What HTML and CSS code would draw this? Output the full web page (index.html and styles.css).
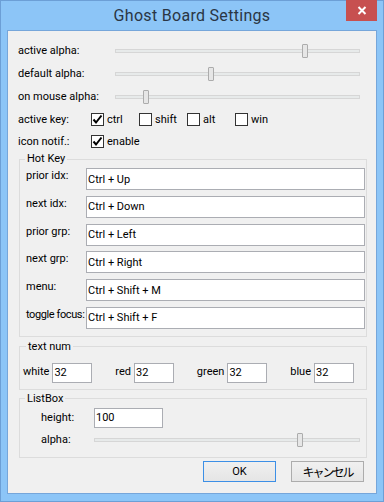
FILE: index.html
```html
<!DOCTYPE html>
<html>
<head>
    <title>Ghost Board Settings</title>
    <meta charset="UTF-8">
    <link rel="stylesheet" href="styles.css">
</head>
<body>
    <div class="window">
        <div class="titlebar">
            <span class="title">Ghost Board Settings</span>
            <button type="button" class="close-button">
                <svg width="10" height="9" viewBox="0 0 10 9">
                    <path d="M1.5 1 L8.5 8 M8.5 1 L1.5 8" stroke="#fff" stroke-width="2" fill="none"/>
                </svg>
            </button>
        </div>

        <div class="client">
            <div class="row">
                <span class="label wide">active alpha:</span>
                <div class="slider"><div class="track"></div><div class="thumb" style="left: 187px;"></div></div>
            </div>
            <div class="row">
                <span class="label wide">default alpha:</span>
                <div class="slider"><div class="track"></div><div class="thumb" style="left: 93px;"></div></div>
            </div>
            <div class="row">
                <span class="label wide">on mouse alpha:</span>
                <div class="slider"><div class="track"></div><div class="thumb" style="left: 28px;"></div></div>
            </div>
            <div class="row">
                <span class="label">active key:</span>
                <div class="checks">
                    <label class="check"><span class="box checked"><svg width="11" height="11" viewBox="0 0 11 11"><path d="M1.5 5.5 L4 8.5 L9.5 1.5" stroke="#000" stroke-width="2" fill="none"/></svg></span>ctrl</label>
                    <label class="check"><span class="box"></span>shift</label>
                    <label class="check"><span class="box"></span>alt</label>
                    <label class="check"><span class="box"></span>win</label>
                </div>
            </div>
            <div class="row short">
                <span class="label">icon notif.:</span>
                <div class="checks">
                    <label class="check"><span class="box checked"><svg width="11" height="11" viewBox="0 0 11 11"><path d="M1.5 5.5 L4 8.5 L9.5 1.5" stroke="#000" stroke-width="2" fill="none"/></svg></span>enable</label>
                </div>
            </div>

            <fieldset class="group hotkey">
                <legend>Hot Key</legend>
                <div class="fields">
                    <div class="field"><span class="name">prior idx:</span><input class="text" type="text" value="Ctrl + Up"></div>
                    <div class="field"><span class="name">next idx:</span><input class="text" type="text" value="Ctrl + Down"></div>
                    <div class="field"><span class="name">prior grp:</span><input class="text" type="text" value="Ctrl + Left"></div>
                    <div class="field"><span class="name">next grp:</span><input class="text" type="text" value="Ctrl + Right"></div>
                    <div class="field"><span class="name">menu:</span><input class="text" type="text" value="Ctrl + Shift + M"></div>
                    <div class="field"><span class="name tight">toggle focus:</span><input class="text" type="text" value="Ctrl + Shift + F"></div>
                </div>
            </fieldset>

            <fieldset class="group textnum">
                <legend>text num</legend>
                <div class="nums">
                    <div class="num"><span>white</span><input class="text small" type="text" value="32"></div>
                    <div class="num"><span>red</span><input class="text small" type="text" value="32"></div>
                    <div class="num"><span>green</span><input class="text small" type="text" value="32"></div>
                    <div class="num"><span>blue</span><input class="text small" type="text" value="32"></div>
                </div>
            </fieldset>

            <fieldset class="group listbox">
                <legend>ListBox</legend>
                <div class="lb-row">
                    <span class="lb-label">height:</span>
                    <input class="text medium" type="text" value="100">
                </div>
                <div class="lb-row alpha">
                    <span class="lb-label">alpha:</span>
                    <div class="slider"><div class="track"></div><div class="thumb" style="left: 203px;"></div></div>
                </div>
            </fieldset>

            <div class="buttons">
                <button type="button" class="push default">OK</button>
                <button type="button" class="push jp">キャンセル</button>
            </div>
        </div>
    </div>
</body>
</html>
```

FILE: styles.css
```css
body {
    margin: 0;
    font-family: Roboto, "Noto Sans", sans-serif;
    font-size: 11px;
    color: #000;
}

.window {
    width: 384px;
    height: 502px;
    box-sizing: border-box;
    border: 1px solid #6c9fd6;
    background-color: #8cc5f7;
    padding: 0 6px 7px 6px;
    display: flex;
    flex-direction: column;
}

.titlebar {
    height: 29px;
    position: relative;
    display: flex;
    align-items: center;
    justify-content: center;
}

.title {
    font-size: 16px;
    letter-spacing: 0.3px;
    color: #2a3644;
}

.close-button {
    position: absolute;
    top: -1px;
    right: 0;
    width: 31px;
    height: 21px;
    padding: 0;
    border: none;
    background-color: #c75050;
    display: flex;
    align-items: center;
    justify-content: center;
}

.client {
    flex: 1;
    border: 1px solid #76a6da;
    background-color: #f0f0f0;
    padding-top: 8px;
    display: flex;
    flex-direction: column;
}

.row {
    display: flex;
    align-items: center;
    height: 23px;
    padding: 0 16px 0 10px;
}

.row.short {
    height: 20px;
}

.label {
    width: 73px;
    flex: none;
}

.label.wide {
    width: 97px;
}

.slider {
    flex: 1;
    position: relative;
    height: 14px;
}

.track {
    position: absolute;
    left: 0;
    right: 0;
    top: 5px;
    height: 4px;
    box-sizing: border-box;
    border: 1px solid #d6d6d6;
    background-color: #e7eaea;
}

.thumb {
    position: absolute;
    top: 0;
    width: 6px;
    height: 14px;
    box-sizing: border-box;
    border: 1px solid #acacac;
    border-radius: 1px;
    background-color: #e6e6e6;
}

.checks {
    display: flex;
}

.check {
    width: 48px;
    display: flex;
    align-items: center;
    gap: 3px;
}

.box {
    width: 13px;
    height: 13px;
    box-sizing: border-box;
    border: 1px solid #333;
    background-color: #fff;
    display: flex;
    align-items: center;
    justify-content: center;
}

.group {
    margin: 0 9px 0 11px;
    border: 1px solid #dcdcdc;
    padding: 0 1px 0 5px;
    min-width: 0;
}

.group legend {
    padding: 0 2px;
    line-height: 16px;
}

.text {
    box-sizing: border-box;
    margin: 0;
    border: 1px solid #abadb3;
    background-color: #fff;
    padding: 0 1px;
    font: inherit;
    color: #000;
    outline: none;
}

.hotkey {
    padding-top: 1px;
    padding-bottom: 7px;
}

.fields {
    display: flex;
    flex-direction: column;
    gap: 5.8px;
    padding-left: 1px;
}

.field {
    display: flex;
    align-items: flex-start;
}

.name {
    width: 60px;
    flex: none;
    line-height: 16px;
    white-space: nowrap;
}

.name.tight {
    letter-spacing: -0.4px;
}

.field .text {
    flex: 1;
    min-width: 0;
    height: 22px;
}

.textnum {
    margin-top: 2px;
    padding: 8px 12px 6px 3px;
}

.textnum legend {
    margin-left: 3px;
}

.nums {
    display: flex;
    justify-content: space-between;
    align-items: center;
}

.num {
    display: flex;
    align-items: center;
    gap: 3px;
}

.num span {
    margin-top: -2px;
}

.text.small {
    width: 40px;
    height: 20px;
}

.listbox {
    margin-top: 1px;
    padding: 1px 6px 10px 5px;
}

.lb-row {
    display: flex;
    align-items: center;
    padding-left: 16px;
}

.lb-row.alpha {
    margin-top: 5px;
}

.lb-label {
    width: 53px;
    flex: none;
}

.text.medium {
    width: 69px;
    height: 20px;
}

.buttons {
    display: flex;
    justify-content: flex-end;
    gap: 15px;
    margin: 3px 12px 0 0;
}

.push {
    width: 73px;
    height: 21px;
    padding: 0;
    border: 1px solid #acacac;
    background: linear-gradient(#f0f0f0, #e5e5e5);
    font: inherit;
    color: #000;
}

.push.default {
    border-color: #3c8fe6;
}

.push.jp {
    font-family: "Noto Sans CJK JP", sans-serif;
    font-size: 12px;
    letter-spacing: -2px;
}
```
